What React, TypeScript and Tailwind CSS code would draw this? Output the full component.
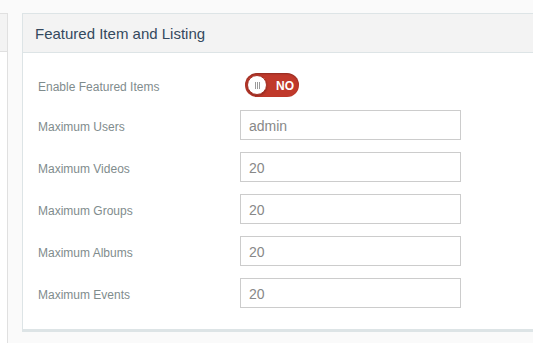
const rows = [
  { label: 'Maximum Users', value: 'admin' },
  { label: 'Maximum Videos', value: '20' },
  { label: 'Maximum Groups', value: '20' },
  { label: 'Maximum Albums', value: '20' },
  { label: 'Maximum Events', value: '20' },
];

const Toggle = () => (
  <div className="relative flex h-[24px] w-[54px] items-center rounded-full bg-[#c0392b] shadow-[inset_0_1px_2px_rgba(0,0,0,0.25)]">
    <div className="ml-[2px] flex h-[20px] w-[20px] items-center justify-center rounded-full border border-[#a93226] bg-white shadow-[0_1px_2px_rgba(0,0,0,0.3)]">
      <div className="flex h-[7px] gap-[1px]">
        <span className="w-px bg-[#9a9a9a]" />
        <span className="w-px bg-[#9a9a9a]" />
        <span className="w-px bg-[#9a9a9a]" />
      </div>
    </div>
    <span className="ml-[9px] pt-px text-[12px] font-bold text-white">NO</span>
  </div>
);

export default function App() {
  return (
    <div
      className="flex h-[343px] w-[533px] overflow-hidden bg-[#fafafa]"
      style={{ fontFamily: '"Liberation Sans", Arial, sans-serif' }}
    >
      <div className="mt-[13px] flex w-[8px] shrink-0 flex-col border-r border-t border-[#e0e0e0] bg-white">
        <div className="h-[38px] border-b border-[#e0e0e0] bg-[#f3f3f3]" />
      </div>

      <div className="ml-[14px] mt-[13px] h-[319px] w-[560px] shrink-0 border-l border-t border-b-[3px] border-[#dde4e6] bg-white">
        <div className="flex h-[39px] items-center border-b border-[#dde4e6] bg-[#f3f3f3] pl-[12px]">
          <h2 className="pt-[2px] text-[15px] text-[#34495e]">Featured Item and Listing</h2>
        </div>

        <div className="flex flex-col gap-[12px] pl-[15px] pt-[20px]">
          <div className="flex h-[24px] items-center">
            <span className="w-[207px] pt-[3px] text-[12px] text-[#7f8c8d]">Enable Featured Items</span>
            <Toggle />
          </div>
          <div className="mt-[1px] flex flex-col gap-[12px]">
            {rows.map((r) => (
              <div key={r.label} className="flex items-center">
                <span className="w-[202px] pt-[3px] text-[12px] text-[#7f8c8d]">{r.label}</span>
                <div className="flex h-[30px] w-[221px] items-center border border-[#cccccc] px-[8px] pt-[2px] text-[14px] text-[#888888]">
                  {r.value}
                </div>
              </div>
            ))}
          </div>
        </div>
      </div>
    </div>
  );
}
